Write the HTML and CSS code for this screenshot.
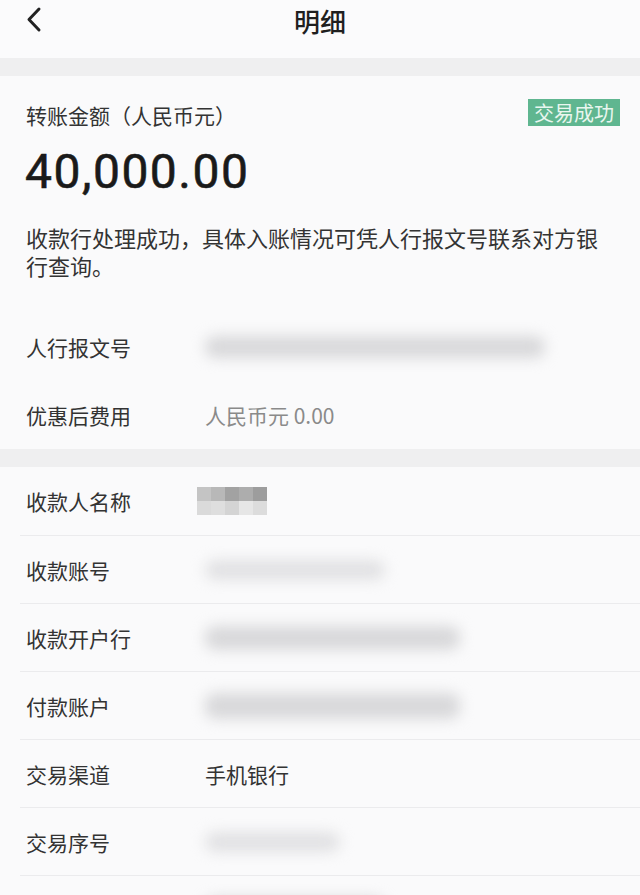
FILE: index.html
```html
<!DOCTYPE html>
<html lang="zh-CN">
	<head>
		<meta charset="utf-8"/>
		<meta name="viewport" content="width=device-width, initial-scale=1.0"/>
		<title>明细</title>
		<link rel="stylesheet" href="styles.css">
	</head>
	<body>
		<header class="topbar">
			<a class="back" href="#">
				<svg width="18" height="28" viewBox="0 0 18 28"><path d="M14 3 L4 13.5 L14 24" fill="none" stroke="#222" stroke-width="3" stroke-linecap="round" stroke-linejoin="round"/></svg>
			</a>
			<h1>明细</h1>
		</header>

		<div class="gap"></div>

		<section class="summary">
			<div class="summary-head">
				<span class="caption">转账金额（人民币元）</span>
				<span class="badge">交易成功</span>
			</div>
			<div class="amount">40,000.00</div>
			<p class="notice">收款行处理成功，具体入账情况可凭人行报文号联系对方银行查询。</p>

			<div class="row plain">
				<span class="label">人行报文号</span>
				<span class="masked" style="width: 340px; height: 22px;"></span>
			</div>
			<div class="row plain">
				<span class="label">优惠后费用</span>
				<span class="value muted">人民币元 0.00</span>
			</div>
		</section>

		<div class="gap"></div>

		<section class="list">
			<div class="row plain">
				<span class="label">收款人名称</span>
				<span class="mosaic">
					<i style="background:#c4c4c4"></i><i style="background:#b8b8b8"></i><i style="background:#a2a2a2"></i><i style="background:#adadad"></i><i style="background:#9d9d9d"></i>
					<i style="background:#dadada"></i><i style="background:#dedede"></i><i style="background:#d4d4d4"></i><i style="background:#e6e6e6"></i><i style="background:#dcdcdc"></i>
				</span>
			</div>
			<div class="row">
				<span class="label">收款账号</span>
				<span class="masked light" style="width: 180px; height: 20px;"></span>
			</div>
			<div class="row">
				<span class="label">收款开户行</span>
				<span class="masked" style="width: 255px; height: 24px;"></span>
			</div>
			<div class="row">
				<span class="label">付款账户</span>
				<span class="masked" style="width: 255px; height: 26px;"></span>
			</div>
			<div class="row">
				<span class="label">交易渠道</span>
				<span class="value">手机银行</span>
			</div>
			<div class="row">
				<span class="label">交易序号</span>
				<span class="masked light" style="width: 135px; height: 20px;"></span>
			</div>
			<div class="row">
				<span class="label"></span>
				<span class="masked" style="width: 180px; height: 24px;"></span>
			</div>
		</section>
	</body>
</html>
```

FILE: styles.css
```css
body {
	margin: 0;
	background: #fafafb;
	color: #2b2b2b;
	font-family: "Noto Sans CJK SC", "Noto Sans", sans-serif;
	overflow: hidden;
}

.topbar {
	position: relative;
	height: 58px;
	display: flex;
	justify-content: center;
	background: #fbfbfc;
}
.topbar h1 {
	margin: 0;
	font-size: 26px;
	font-weight: 500;
	line-height: 42px;
	color: #1f1f1f;
}
.back {
	position: absolute;
	left: 25px;
	top: 6px;
	display: block;
}
.back svg { display: block; }

.gap {
	height: 18px;
	background: #efeff0;
}

.summary {
	padding: 24px 0 0 0;
}
.summary-head {
	display: flex;
	justify-content: space-between;
	align-items: center;
	padding: 0 20px 0 26px;
}
.caption {
	font-size: 21px;
	line-height: 30px;
	color: #333;
}
.badge {
	background: #5fb690;
	color: #e9f6ef;
	font-size: 20px;
	line-height: 27px;
	padding: 0 6px;
	margin-top: -6px;
}
.amount {
	margin: 14px 0 0 25px;
	font-family: Roboto, "Noto Sans", sans-serif;
	font-size: 48px;
	font-weight: 400;
	line-height: 56px;
	color: #1a1a1a;
	letter-spacing: 1.5px;
	-webkit-text-stroke: 0.6px #1a1a1a;
}
.notice {
	margin: 23px 30px 34px 26px;
	font-size: 22px;
	line-height: 28px;
	color: #333;
}

.row {
	display: flex;
	align-items: center;
	height: 67px;
	border-top: 1px solid #ebebed;
	margin-left: 20px;
	padding-left: 6px;
}
.row.plain {
	border-top: none;
	height: 68px;
	margin-left: 0;
	padding-left: 26px;
}
.label {
	width: 179px;
	flex: none;
	font-size: 21px;
	color: #333;
}
.value {
	font-size: 21px;
	color: #333;
}
.value.muted { color: #8a8a8a; }

/* blurred account numbers */
.masked {
	display: block;
	background: #d8d8da;
	border-radius: 10px;
	filter: blur(7px);
}
.masked.light { background: #e1e1e3; }

.mosaic {
	display: grid;
	grid-template-columns: repeat(5, 14px);
	grid-template-rows: 14px 14px;
	margin-left: -8px;
}
.mosaic i { display: block; }
```
